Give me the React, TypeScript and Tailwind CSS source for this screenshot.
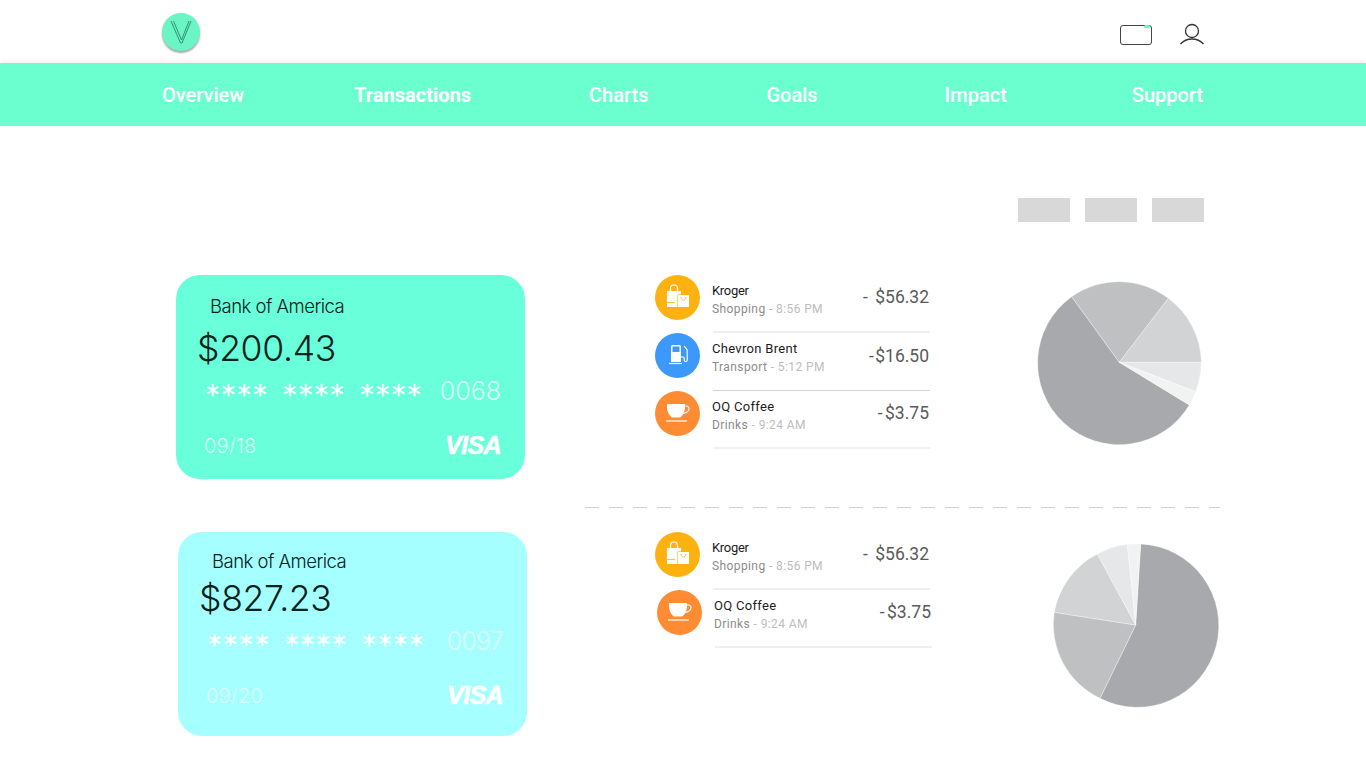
import React from "react";

const Bag = () => (
  <svg viewBox="0 0 45 45" className="w-[45px] h-[45px]">
    <circle cx="22.5" cy="22.5" r="22.5" fill="#FFB20F" />
    <path d="M12 16h14v16H12z" fill="#fff" />
    <path d="M15.500 16v-2.500a3.500 3.500 0 0 1 7 0V16" fill="none" stroke="#fff" strokeWidth="1.200" />
    <path d="M12 27.500h8" stroke="#FFB20F" strokeWidth="0.800" />
    <path d="M22.400 19.400h12.200v13.200H22.400z" fill="#FFB20F" />
    <path d="M23 20h11v12H23z" fill="#fff" />
    <path d="M26 22c.2 4 4.800 4 5 0" fill="none" stroke="#FFB20F" strokeWidth="0.900" />
  </svg>
);
const Pump = () => (
  <svg viewBox="0 0 45 45" className="w-[45px] h-[45px]">
    <circle cx="22.5" cy="22.5" r="22.5" fill="#3D98FB" />
    <path d="M16 13.500a1.500 1.500 0 0 1 1.500-1.500h7a1.500 1.500 0 0 1 1.500 1.500V29H16z" fill="#fff" />
    <rect x="17.500" y="13.500" width="7" height="5.500" fill="#3D98FB" />
    <path d="M14 30.500h13" stroke="#fff" strokeWidth="1.200" />
    <path d="M26 24h2c.8 0 1.200.5 1.200 1.200v1.800c0 2 3 2 3 0V17l-3-4" fill="none" stroke="#fff" strokeWidth="1.200" />
  </svg>
);
const Cup = () => (
  <svg viewBox="0 0 45 45" className="w-[45px] h-[45px]">
    <circle cx="22.5" cy="22.5" r="22.5" fill="#FF8B33" />
    <path d="M12 13h18v3c0 5-2.500 9-5 10.500h-8C14.500 25 12 21 12 16z" fill="#fff" />
    <path d="M29.500 15h2a2.500 2.500 0 0 1 2.500 2.700c0 2.600-2.800 4-5.800 4.800" fill="none" stroke="#fff" strokeWidth="1.100" />
    <path d="M11 30h21" stroke="#fff" strokeWidth="1.200" />
  </svg>
);

type Tx = { icon: React.ReactNode; name: string; cat: string; time: string; amt: string; amtClass: string; strong?: boolean; tight?: boolean; shift?: boolean };

const List = ({ items, className }: { items: Tx[]; className: string }) => (
  <div className={`flex flex-col w-[275px] font-['Roboto',sans-serif] ${className}`}>
    {items.map((t) => (
      <div key={t.name + t.time} className={`flex gap-[13px] h-[58px] ${t.shift ? "ml-[2px] -mr-[2px]" : ""}`}>
        <div className="w-[45px] h-[45px] shrink-0">{t.icon}</div>
        <div className={`flex-1 flex justify-between items-center pb-[11px] ${t.strong ? "border-b border-[#d4d4d4]" : "border-b-2 border-[#efefef]"}`}>
          <div className="flex flex-col mt-[4px] -ml-[1px]">
            <span className={`text-[13px] leading-[18px] text-[#1c1c1c] ${t.tight ? "tracking-[-0.3px]" : "tracking-[0.3px]"}`}>{t.name}</span>
            <span className="text-[12px] leading-[18px] text-[#8b8b8b] tracking-[0.4px]">
              {t.cat} <span className="text-[#bdbdbd]">- {t.time}</span>
            </span>
          </div>
          <span className={`text-[17.5px] font-normal text-[#5a5a5a] pr-[1px] ${t.amtClass}`}>{t.amt}</span>
        </div>
      </div>
    ))}
  </div>
);

const Card = ({ bg, bal, last, exp, tone, bankTop, balTop, lastClass, className }: { bg: string; bal: string; last: string; exp: string; tone: string; bankTop: string; balTop: string; lastClass: string; className: string }) => (
  <div className={`w-[349px] h-[204px] rounded-[24px] flex flex-col font-['Inter',sans-serif] font-light ${bg} ${className}`}>
    <div className={`pl-[34px] text-[18.5px] leading-[24px] tracking-[-0.5px] text-[#06221c] ${bankTop}`}>Bank of America</div>
    <div className={`pl-[21px] text-[35.5px] leading-[44px] tracking-[-0.3px] text-[#06221c] ${balTop}`}>{bal}</div>
    <div className="flex items-center justify-between pl-[30px] pr-[24px] h-[30px] text-white mt-[5px]">
      <div className="flex gap-[14px] font-['DejaVu_Sans',sans-serif] font-normal text-[26px] leading-none tracking-[2.8px] pt-[8px] [-webkit-text-stroke:0.3px_white]">
        <span>****</span>
        <span>****</span>
        <span>****</span>
      </div>
      <span className={`text-[25px] leading-[30px] ${tone} ${lastClass}`}>{last}</span>
    </div>
    <div className="flex items-center justify-between pl-[28px] pr-[24px] h-[30px] text-white mt-[25px]">
      <span className={`text-[20px] tracking-[0.2px] ${tone}`}>{exp}</span>
      <span className="font-['Liberation_Sans',sans-serif] font-bold italic text-[25px] tracking-[-0.6px] leading-none -mt-[1px] [-webkit-text-stroke:0.6px_white]">VISA</span>
    </div>
  </div>
);

const Slice = ({ d, f }: { d: string; f: string }) => <path d={d} fill={f} stroke="#fff" strokeWidth="1" />;

export default function App() {
  const kroger: Tx = { icon: <Bag />, name: "Kroger", cat: "Shopping", time: "8:56 PM", amt: "- $56.32", amtClass: "[word-spacing:3px]", tight: true };
  const chevron: Tx = { icon: <Pump />, name: "Chevron Brent", cat: "Transport", time: "5:12 PM", amt: "- $16.50", amtClass: "[word-spacing:-3px]", strong: true };
  const coffee: Tx = { icon: <Cup />, name: "OQ Coffee", cat: "Drinks", time: "9:24 AM", amt: "- $3.75", amtClass: "[word-spacing:-2px]" };
  return (
    <div className="min-h-screen bg-white font-['Roboto',sans-serif]">
      <header className="h-[63px] flex items-center justify-between pl-[162px] pr-[162px]">
        <div className="w-[38px] h-[38px] rounded-full bg-[#6BF5C4] shadow-[0_2px_2px_rgba(0,0,0,0.35)] flex items-center justify-center">
          <svg viewBox="0 0 38 38" className="w-[38px] h-[38px]" fill="none" stroke="#1f7a62" strokeWidth="0.8">
            <path d="M9 8l9.500 22h1.500L29 8" />
            <path d="M11.500 8l8 19L27 8" />
          </svg>
        </div>
        <div className="flex items-center gap-[28px]">
          <div className="relative w-[32px] h-[20px] mt-[7px] border border-[#444] rounded-[3px]">
            <span className="absolute -top-[1px] right-[1px] w-[6px] h-[3px] rounded-full bg-[#6BF5C4]" />
          </div>
          <svg viewBox="0 0 24 24" className="w-[24px] h-[24px] mt-[5px]" fill="none" stroke="#333" strokeWidth="1.300">
            <circle cx="12" cy="9" r="6.500" />
            <path d="M0.500 22C4 18 8 17 12 17s8 1 11.500 5" />
          </svg>
        </div>
      </header>
      <nav className="h-[63px] bg-[#6BFFCF] flex items-center pl-[162px] shadow-[0_-2px_4px_rgba(0,0,0,0.06)] text-[20px] text-white font-medium">
        <span>Overview</span>
        <span className="ml-[110px] font-bold">Transactions</span>
        <span className="ml-[118px]">Charts</span>
        <span className="ml-[118px]">Goals</span>
        <span className="ml-[127px]">Impact</span>
        <span className="ml-[125px]">Support</span>
      </nav>
      <main className="pt-[72px]">
        <div className="flex justify-end gap-[15px] pr-[162px]">
          <div className="w-[52px] h-[24px] bg-[#d8d8d8]" />
          <div className="w-[52px] h-[24px] bg-[#d8d8d8]" />
          <div className="w-[52px] h-[24px] bg-[#d8d8d8]" />
        </div>
        <section className="flex mt-[53px]">
          <Card className="ml-[176px]" bg="bg-[#68FFDA]" bal="$200.43" last="0068" exp="09/18" tone="text-white/75" bankTop="pt-[19px]" balTop="mt-[9px]" lastClass="" />
          <List className="ml-[130px]" items={[kroger, chevron, coffee]} />
          <svg viewBox="0 0 540 525" className="w-[180px] h-[175px] ml-[100px]">
            <Slice d="M268 262L125 65A245 245 0 1 0 478 390Z" f="#A7A9AC" />
            <Slice d="M268 262L125 65A245 245 0 0 1 415 70Z" f="#BFC0C1" />
            <Slice d="M268 262L415 70A245 245 0 0 1 514 262Z" f="#D1D3D4" />
            <Slice d="M268 262L514 262A245 245 0 0 1 497 350Z" f="#E6E7E8" />
            <Slice d="M268 262L497 350A245 245 0 0 1 478 390Z" f="#F1F2F2" />
          </svg>
        </section>
        <div className="mt-[28px] ml-[585px] w-[635px] h-px bg-[repeating-linear-gradient(90deg,#d0d0d0_0,#d0d0d0_14px,transparent_14px,transparent_24px)]" />
        <section className="flex mt-[24px]">
          <Card className="ml-[178px]" bg="bg-[#A5FFFF]" bal="$827.23" last="0097" exp="09/20" tone="text-white/60" bankTop="pt-[17px]" balTop="mt-[4px]" lastClass="tracking-[-0.8px]" />
          <List className="ml-[128px]" items={[kroger, { ...coffee, shift: true }]} />
          <svg viewBox="0 0 540 534" className="w-[180px] h-[178px] ml-[115px] mt-[3px]">
            <Slice d="M272 270L287 27A245 245 0 1 1 165 490Z" f="#A7A9AC" />
            <Slice d="M272 270L165 490A245 245 0 0 1 28 232Z" f="#BFC0C1" />
            <Slice d="M272 270L28 232A245 245 0 0 1 157 57Z" f="#D1D3D4" />
            <Slice d="M272 270L157 57A245 245 0 0 1 247 28Z" f="#E6E7E8" />
            <Slice d="M272 270L247 28A245 245 0 0 1 287 27Z" f="#F1F2F2" />
          </svg>
        </section>
      </main>
    </div>
  );
}
